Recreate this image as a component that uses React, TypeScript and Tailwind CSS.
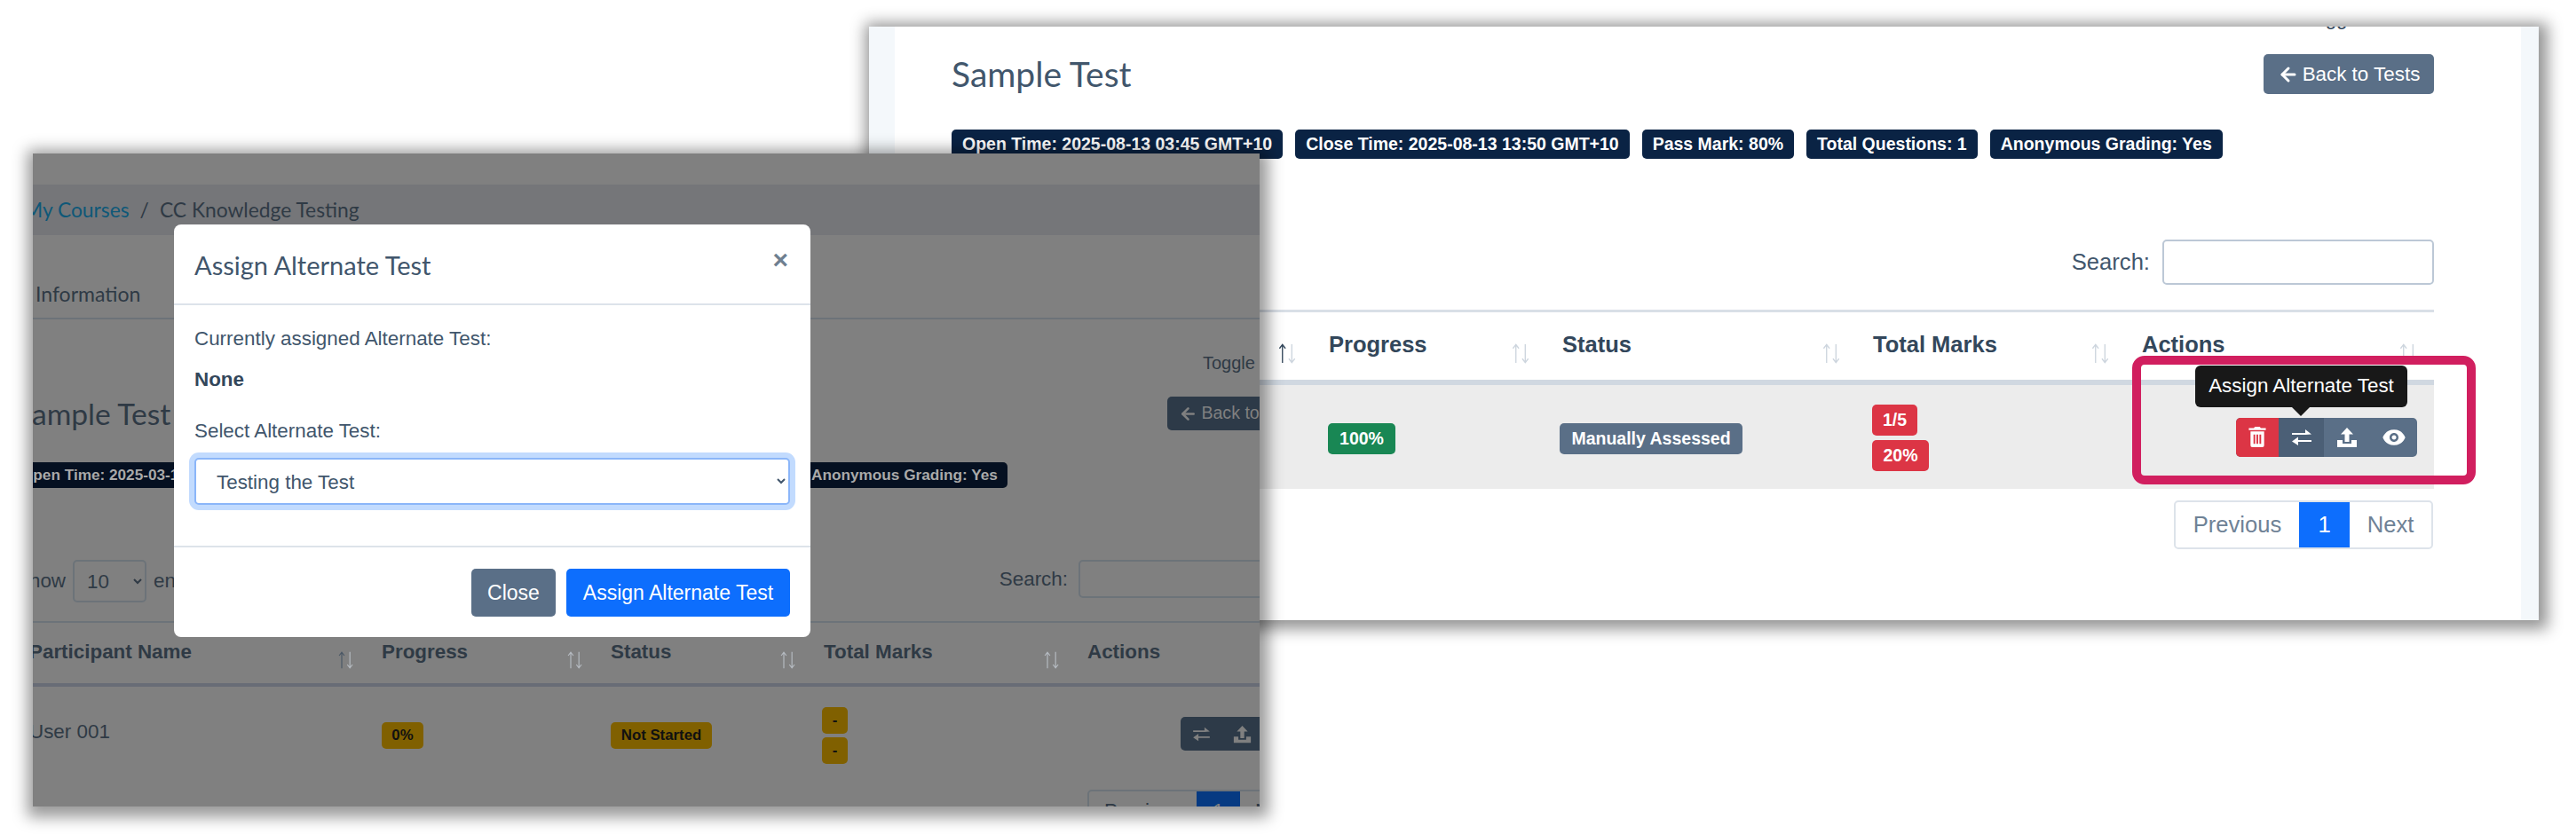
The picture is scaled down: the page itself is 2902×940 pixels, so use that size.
import { ArrowLeft } from "lucide-react";
import { BiSolidShow } from "react-icons/bi";

const SortArrows = ({ active = false, className = "" }: { active?: boolean; className?: string }) => (
    <svg viewBox="0 0 24 24" className={className} fill="none" strokeWidth="1.4">
        <path d="M6 23V2M2.5 6L6 1.5 9.500 6" stroke={active ? "#33475b" : "#cdd5de"} />
        <path d="M17 1v21M13.500 18l3.500 4.500 3.500-4.500" stroke="#cdd5de" />
    </svg>
);

const TrashIcon = ({ className = "" }: { className?: string }) => (
    <svg viewBox="0 0 20 24" className={className} fill="currentColor">
        <path d="M7 0h6l1 1.500h6V4H0V1.500h6z" />
        <path fillRule="evenodd" d="M2 5.500h16V22a2 2 0 0 1-2 2H4a2 2 0 0 1-2-2zM5.500 9v11h2V9zM9 9v11h2V9zM12.500 9v11h2V9z" />
    </svg>
);

const SwapIcon = ({ className = "" }: { className?: string }) => (
    <svg viewBox="0 0 24 20" className={className} fill="currentColor">
        <path d="M1 5h15V1l7 5.500-7 .5H1z" />
        <path d="M23 13H8V9.500L1 14.500 8 19v-4h15z" />
    </svg>
);

const UploadIcon = ({ className = "" }: { className?: string }) => (
    <svg viewBox="0 0 24 24" className={className} fill="currentColor">
        <path d="M12 1l7 7.500h-4.500V17h-5V8.500H5z" />
        <path d="M1 15h6v4h10v-4h6v8H1z" />
    </svg>
);

const Badge = ({ className, children }: { className: string; children: React.ReactNode }) => (
    <span className={`inline-flex items-center justify-center rounded-[5px] font-bold whitespace-nowrap ${className}`}>
        {children}
    </span>
);

const RightWindow = () => {
    const badges = [
        "Open Time: 2025-08-13 03:45 GMT+10",
        "Close Time: 2025-08-13 13:50 GMT+10",
        "Pass Mark: 80%",
        "Total Questions: 1",
        "Anonymous Grading: Yes",
    ];
    const cols = [
        { label: "", active: true },
        { label: "Progress" },
        { label: "Status" },
        { label: "Total Marks" },
        { label: "Actions" },
    ];

    return (
        <div className="absolute left-[979px] top-[30px] h-[669px] w-[1881px] overflow-hidden bg-[#f4f8fb] pl-[29px] pr-[20px] shadow-[3px_3px_16px_7px_rgba(0,0,0,0.42)]">
            <div className="h-full bg-white pl-[64px] pr-[98px]">
                <div className="relative h-0 overflow-visible">
                    <span className="absolute left-[1524px] -top-[20px] text-[22.400px] leading-[22px] text-[#33475b]">Toggle</span>
                </div>

                <div className="flex justify-between pt-[31px]">
                    <h1 className="font-['Lato'] text-[39px] leading-[45px] text-[#41566c]">Sample Test</h1>
                    <button className="flex h-[45px] w-[192px] items-center justify-center gap-[4px] rounded-[5px] bg-[#5a6f87] text-[22.400px] text-white">
                        <ArrowLeft className="h-[24px] w-[24px]" strokeWidth={3} />
                        Back to Tests
                    </button>
                </div>

                <div className="mt-[40px] flex gap-[14px]">
                    {badges.map((b) => (
                        <Badge key={b} className="h-[33px] bg-[#0a2344] px-[12px] text-[19.500px] text-white">
                            {b}
                        </Badge>
                    ))}
                </div>

                <div className="mt-[91px] flex h-[51px] items-center justify-end gap-[14px]">
                    <span className="text-[25.600px] text-[#41566c]">Search:</span>
                    <input className="h-[51px] w-[306px] rounded-[5px] border-2 border-[#bcc8d6] bg-white" />
                </div>

                <div className="mt-[28px] grid grid-cols-[407px_263px_350px_303px_347px] border-t-[3px] border-b-[6px] border-t-[#d9dfe7] border-b-[#d0d8e1]">
                    {cols.map((c, i) => (
                        <div key={i} className="relative flex h-[76px] items-start justify-between px-[17px] pt-[21px]">
                            <span className="pl-[1px] text-[25.500px] leading-[30px] font-bold text-[#33475b]">{c.label}</span>
                            <SortArrows active={c.active} className="mt-[14px] h-[23px] w-[23px]" />
                        </div>
                    ))}
                </div>

                <div className="grid h-[117px] grid-cols-[407px_263px_350px_303px_347px] items-center bg-[#ececec]">
                    <div />
                    <div className="px-[17px] pt-[4px]">
                        <Badge className="h-[35px] w-[76px] bg-[#198754] text-[19.500px] text-white">100%</Badge>
                    </div>
                    <div className="pl-[15px] pt-[4px]">
                        <Badge className="h-[35px] w-[206px] bg-[#5a6f87] text-[19.500px] text-white">Manually Assessed</Badge>
                    </div>
                    <div className="flex flex-col items-start gap-[5px] px-[17px] pt-[2px]">
                        <Badge className="h-[35px] w-[51px] bg-[#dc3545] text-[19.500px] text-white">1/5</Badge>
                        <Badge className="h-[35px] w-[64px] bg-[#dc3545] text-[19.500px] text-white">20%</Badge>
                    </div>
                    <div className="flex justify-end pr-[19px]">
                        <div className="relative flex h-[44px] overflow-visible rounded-[5px] bg-[#5a6f87] text-white">
                            <span className="flex w-[48px] items-center justify-center rounded-l-[5px] bg-[#dc3545]">
                                <TrashIcon className="h-[23px] w-[20px]" />
                            </span>
                            <span className="flex w-[51px] items-center justify-center bg-[#4b5f76]">
                                <SwapIcon className="h-[20px] w-[24px]" />
                            </span>
                            <span className="flex w-[52px] items-center justify-center">
                                <UploadIcon className="h-[24px] w-[24px]" />
                            </span>
                            <span className="flex w-[53px] items-center justify-center">
                                <BiSolidShow className="h-[30px] w-[30px]" />
                            </span>
                            <div className="absolute bottom-[56px] -left-[46px] flex h-[47px] w-[239px] items-center justify-center rounded-[6px] bg-[#181818] text-[22.400px] whitespace-nowrap text-white">
                                Assign Alternate Test
                                <span className="absolute -bottom-[10px] left-[109px] border-x-[10px] border-t-[10px] border-x-transparent border-t-[#181818]" />
                            </div>
                        </div>
                    </div>
                </div>

                <div className="mt-[13px] mr-[1px] flex justify-end">
                    <div className="flex h-[55px] overflow-hidden rounded-[5px] border-2 border-[#dde3ea] text-[25.600px]">
                        <span className="flex w-[139px] items-center justify-center text-[#6f8296]">Previous</span>
                        <span className="-my-[2px] flex w-[57px] items-center justify-center bg-[#0d6efd] text-white">1</span>
                        <span className="flex w-[92px] items-center justify-center text-[#6f8296]">Next</span>
                    </div>
                </div>
            </div>

            <div className="absolute left-[1423px] top-[371px] h-[145px] w-[387px] rounded-[14px] border-[10px] border-[#d11f5f]" />
        </div>
    );
};

const LeftWindow = () => {
    const columns = ["Participant Name", "Progress", "Status", "Total Marks", "Actions"];
    const badges = [
        "Open Time: 2025-03-13 03:45 GMT+10",
        "Close Time: 2025-03-13 13:50 GMT+10",
        "Total Questions: 1",
        "Anonymous Grading: Yes",
    ];

    return (
        <div className="absolute left-[37px] top-[173px] h-[736px] w-[1382px] overflow-hidden bg-[#808080] shadow-[2px_4px_16px_8px_rgba(0,0,0,0.4)]">
            <div className="h-[35px]" />
            <div className="flex h-[57px] items-center gap-[12px] bg-[#757679] font-['Lato'] text-[22.800px] text-[#2f3a45]">
                <span className="-ml-[10px] text-[#0e5878]">My Courses</span>
                <span>/</span>
                <span>CC Knowledge Testing</span>
            </div>
            <div className="h-[95px] border-b-2 border-[#6c7379] pt-[52px] pl-[3px] font-['Lato'] text-[23px] leading-[28px] text-[#2f3a45]">
                Information
            </div>

            <div className="-ml-[19px] w-[1465px]">
                <div className="mt-[34px] ml-[1337px] h-[30px] text-[20px] leading-[30px] text-[#2f3a45]">Toggle</div>

                <div className="mt-[23px] flex h-[38px] items-center justify-between">
                    <h2 className="font-['Lato'] text-[33.600px] leading-[38px] text-[#2f3a45]">Sample Test</h2>
                    <button className="flex h-[38px] w-[168px] items-center justify-center gap-[4px] rounded-[5px] bg-[#2d3a48] text-[19.600px] whitespace-nowrap text-[#808080]">
                        <ArrowLeft className="h-[21px] w-[21px]" strokeWidth={3} />
                        Back to Tests
                    </button>
                </div>

                <div className="mt-[36px] -ml-[5px] flex gap-[19px]">
                    {badges.map((b) => (
                        <Badge key={b} className="h-[29px] bg-[#051021] px-[11px] text-[17.200px] text-[#a9a9a9]">
                            {b}
                        </Badge>
                    ))}
                </div>

                <div className="mt-[81px] flex h-[48px] items-start justify-between">
                    <div className="flex items-center gap-[8px] text-[22.400px] text-[#2f3a45]">
                        <span className="leading-[48px]">Show</span>
                        <select
                            defaultValue="10"
                            className="h-[48px] w-[83px] rounded-[5px] border-2 border-[#6c7379] bg-transparent pl-[10px] text-[22.400px] text-[#2f3a45]"
                        >
                            <option value="10">10</option>
                        </select>
                        <span>entries</span>
                    </div>
                    <div className="flex items-center gap-[12px] text-[22.400px] text-[#2f3a45]">
                        <span>Search:</span>
                        <input className="h-[43px] w-[268px] rounded-[5px] border-2 border-[#6c7379] bg-transparent" />
                    </div>
                </div>

                <div className="mt-[21px] grid grid-cols-[397px_258px_240px_297px_273px] border-t-2 border-b-4 border-t-[#6c7379] border-b-[#686c76]">
                    {columns.map((c, i) => (
                        <div key={c} className="flex h-[68px] items-start justify-between px-[15px] pt-[20px]">
                            <span className="text-[22.400px] leading-[26px] font-bold text-[#2f3a45]">{c}</span>
                            <SortArrows active={i === 0} className="mt-[12px] h-[20px] w-[20px] opacity-70" />
                        </div>
                    ))}
                </div>

                <div className="grid h-[116px] grid-cols-[397px_258px_240px_297px_273px] items-center">
                    <div className="px-[15px] pb-[14px] text-[22.400px] text-[#2f3a45]">User 001</div>
                    <div className="px-[15px] pb-[6px]">
                        <Badge className="h-[30px] w-[47px] bg-[#806000] text-[16.800px] text-[#111]">0%</Badge>
                    </div>
                    <div className="px-[15px] pb-[6px]">
                        <Badge className="h-[30px] w-[114px] bg-[#806000] text-[16.800px] text-[#111]">Not Started</Badge>
                    </div>
                    <div className="flex flex-col items-start gap-[4px] px-[13px] pb-[6px]">
                        <Badge className="h-[30px] w-[29px] bg-[#806000] text-[16.800px] text-[#111]">-</Badge>
                        <Badge className="h-[30px] w-[29px] bg-[#806000] text-[16.800px] text-[#111]">-</Badge>
                    </div>
                    <div className="flex justify-end pr-[15px] pb-[10px]">
                        <div className="flex h-[38px] rounded-[5px] bg-[#2d3a48] text-[#808080]">
                            <span className="flex w-[46px] items-center justify-center">
                                <SwapIcon className="h-[17px] w-[21px]" />
                            </span>
                            <span className="flex w-[46px] items-center justify-center">
                                <UploadIcon className="h-[21px] w-[21px]" />
                            </span>
                            <span className="flex w-[46px] items-center justify-center">
                                <BiSolidShow className="h-[26px] w-[26px]" />
                            </span>
                        </div>
                    </div>
                </div>

                <div className="ml-[1207px] flex h-[48px] w-[260px] overflow-hidden rounded-[5px] border-2 border-[#6c7379] text-[22.400px] text-[#2f3a45]">
                    <span className="flex w-[121px] items-center justify-center">Previous</span>
                    <span className="-my-[2px] flex w-[49px] items-center justify-center bg-[#063a82] text-[#808080]">1</span>
                    <span className="flex w-[80px] items-center justify-center">Next</span>
                </div>
            </div>

            {/* Modal */}
            <div className="absolute left-[159px] top-[80px] flex h-[465px] w-[717px] flex-col rounded-[8px] bg-white text-[#41566c]">
                <div className="flex h-[91px] items-start justify-between border-b-2 border-[#dde3ea] pl-[23px] pr-[25px]">
                    <h3 className="pt-[28px] font-['Lato'] text-[29px] leading-[36px] text-[#41566c]">Assign Alternate Test</h3>
                    <span className="pt-[20px] text-[30px] leading-[40px] font-bold text-[#6f7f90]">×</span>
                </div>
                <div className="h-[273px] border-b-2 border-[#dde3ea] px-[23px]">
                    <p className="pt-[25px] text-[22.400px] leading-[26px]">Currently assigned Alternate Test:</p>
                    <p className="pt-[20px] text-[22.400px] leading-[26px] font-bold text-[#33475b]">None</p>
                    <p className="pt-[32px] text-[22.400px] leading-[26px]">Select Alternate Test:</p>
                    <select
                        defaultValue="t"
                        className="mt-[17px] h-[53px] w-full rounded-[5px] border-2 border-[#8bb6f9] bg-white pl-[19px] pt-[2px] text-[22.400px] text-[#41566c] shadow-[0_0_0_6px_#c2dbfe] outline-none"
                    >
                        <option value="t">Testing the Test</option>
                    </select>
                </div>
                <div className="flex flex-1 items-start justify-end gap-[12px] pt-[24px] pr-[23px]">
                    <button className="h-[54px] w-[95px] rounded-[5px] bg-[#5a6f87] text-[23px] text-white">Close</button>
                    <button className="h-[54px] w-[252px] rounded-[5px] bg-[#0d6efd] text-[23px] text-white">Assign Alternate Test</button>
                </div>
            </div>
        </div>
    );
};

export default function App() {
    return (
        <div className="relative h-[940px] w-[2902px] overflow-hidden bg-white font-['Liberation_Sans',sans-serif]">
            <RightWindow />
            <LeftWindow />
        </div>
    );
}
